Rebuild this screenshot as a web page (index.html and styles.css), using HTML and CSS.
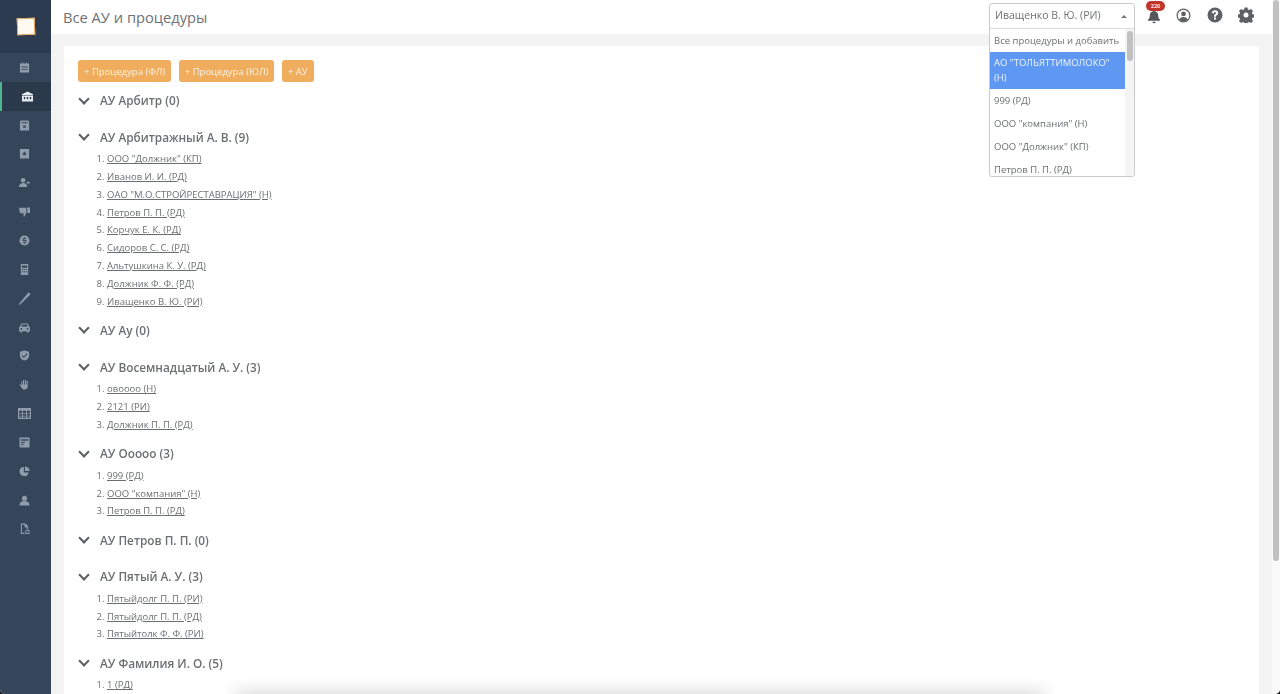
FILE: index.html
```html
<!DOCTYPE html>
<html lang="ru">
<head>
    <meta charset="UTF-8">
    <title>Все АУ и процедуры</title>
    <link rel="stylesheet" href="styles.css">
</head>
<body>
    <div class="app">
        <aside class="sidebar">
            <div class="brand"><span class="brand-mark"></span></div>
            <nav class="menu">
                <a class="menu-item"><svg viewBox="0 0 12 12"><path fill-rule="evenodd" d="M1 1.500h2.500V.5h1v1h3V.5h1v1H11V11.500H1zM2.500 5v1h7V5zm0 2.500v1h7v-1z"/></svg></a>
                <a class="menu-item active"><svg viewBox="0 0 12 12"><path fill-rule="evenodd" d="M6 .5 12 3.500V5H0V3.500zM0 5.500h12V11.500H0zM2 6.500V9h1.500V6.500zm3.200 0V9h1.600V6.500zm3.300 0V9H10V6.500z"/></svg></a>
                <a class="menu-item"><svg viewBox="0 0 12 12"><path fill-rule="evenodd" d="M1 1.500 2 .5h8l1 1v10H1zM2.500 2.500v1h7v-1zM4.500 6v2.500h3V6z"/></svg></a>
                <a class="menu-item"><svg viewBox="0 0 12 12"><path fill-rule="evenodd" d="M1 1h10v10.500H1zm5 2.500L5.200 5.200 3.500 5.500l1.200 1.200-.3 1.800L6 7.700l1.600.8-.3-1.800 1.200-1.200-1.700-.3z"/></svg></a>
                <a class="menu-item"><svg viewBox="0 0 12 12"><circle cx="4.500" cy="3.500" r="2.500"/><path d="M0 11c0-3 2-4.500 4.500-4.500S9 8 9 11zM9.500 4.500h1v1.200H12v1h-1.500V8h-1V6.700H8v-1h1.500z"/></svg></a>
                <a class="menu-item"><svg viewBox="0 0 12 12"><path d="M0 2h8v5L6 11.500H5V8H1zM9 1.500h3V7.500H9z"/></svg></a>
                <a class="menu-item"><svg viewBox="0 0 12 12"><path fill-rule="evenodd" d="M6 .5a5.500 5.500 0 1 0 0 11 5.500 5.500 0 0 0 0-11zM5.500 2.500h1v1H8v1H5v1h3v3H6.500v1h-1v-1H4v-1h3v-1H4V3.500h1.500z"/></svg></a>
                <a class="menu-item"><svg viewBox="0 0 12 12"><path fill-rule="evenodd" d="M2 0h8v12H2zM3.200 1.500v2.500h5.600V1.500zM3.200 5.500v1h1.500v-1zm2.200 0v1h1.200v-1zm2 0v1h1.400v-1zM3.200 8v1h1.500V8zm2.200 0v1h1.200V8zm2 0v1h1.400V8z"/></svg></a>
                <a class="menu-item large"><svg viewBox="0 0 12 12"><path d="M9.700 .3l2 1.700L2 11.500 .3 11.700z"/></svg></a>
                <a class="menu-item"><svg viewBox="0 0 12 12"><path fill-rule="evenodd" d="M2.500 1.500h7L11 5l1 1v4h-1.500v1.500h-2V10h-5v1.500h-2V10H0V6l1-1zM3.300 2.800 2.500 5h7l-.8-2.200zM2.500 6.500a1 1 0 1 0 0 2 1 1 0 0 0 0-2zm7 0a1 1 0 1 0 0 2 1 1 0 0 0 0-2z"/></svg></a>
                <a class="menu-item"><svg viewBox="0 0 12 12"><path fill-rule="evenodd" d="M6 .5 11 2v4c0 3-2.500 5-5 5.500C3.500 11 1 9 1 6V2zM3.500 5.500 2.800 6.300 5.300 8.800 9.300 4.300 8.500 3.500 5.300 7.100z"/></svg></a>
                <a class="menu-item"><svg viewBox="0 0 12 12"><path d="M2.500 2.500h1V6h.800V1.200h1.200V6h.800V1h1.200v5h.800V1.800h1.300V8c0 2-1.300 3.500-3.500 3.500-1.700 0-2.700-.8-3.500-2.200L.5 6.300l1-.6L2.500 7z"/></svg></a>
                <a class="menu-item large"><svg viewBox="0 0 12 12"><path fill-rule="evenodd" d="M0 1h12v10H0zM1 3.500v2h2.800v-2zm3.600 0v2h2.800v-2zm3.600 0v2H11v-2zM1 6.200v1.800h2.800V6.200zm3.600 0v1.800h2.800V6.200zm3.600 0v1.800H11V6.200zM1 8.700V10h2.800V8.700zm3.600 0V10h2.800V8.700zm3.600 0V10H11V8.700z"/></svg></a>
                <a class="menu-item"><svg viewBox="0 0 12 12"><path fill-rule="evenodd" d="M.5 .5h11v11H.5zM2 2.500v1.500h8V2.500zm0 3v1h4.500v-1zm0 2v1h3.500v-1z"/></svg></a>
                <a class="menu-item"><svg viewBox="0 0 12 12"><path d="M5.300 1a5 5 0 1 0 5.200 6H5.300z"/><path d="M6.500 .5V5.500H11.500A5 5 0 0 0 6.500 .5z"/></svg></a>
                <a class="menu-item"><svg viewBox="0 0 12 12"><circle cx="6" cy="3.500" r="2.800"/><path d="M.5 11.500c0-3.500 2-5 5.500-5s5.500 1.500 5.500 5z"/></svg></a>
                <a class="menu-item"><svg viewBox="0 0 12 12"><path fill-rule="evenodd" d="M2 .5h5l3 3V7H8.500V4.500H6V2H3.200v8.500H6V12H2zM7 7.500h4.500V12H7zm1 1v2.500h2.500V8.500z"/></svg></a>
            </nav>
        </aside>

        <div class="main">
            <header class="topbar">
                <h1>Все АУ и процедуры</h1>
                <div class="top-icons">
                    <span class="bell">
                        <svg viewBox="0 0 14 16"><path d="M7 1.500a1 1 0 0 1 1 1c2.300.5 3.500 2.300 3.500 4.500 0 2.500.8 3.500 2 4.500v1H.5v-1c1.200-1 2-2 2-4.500C2.500 4.800 3.700 3 6 2.500a1 1 0 0 1 1-1zM5.300 13.500h3.400a1.700 1.700 0 0 1-3.400 0z"/></svg>
                        <b class="badge">220</b>
                    </span>
                    <svg class="top-icon user-icon" viewBox="0 0 16 16"><circle cx="8" cy="8" r="6.800" fill="none" stroke="currentColor" stroke-width="1.300"/><circle cx="8" cy="6.300" r="2.500"/><path d="M3.500 12.500c.8-2 2.500-2.800 4.500-2.800s3.700.8 4.500 2.800C11.300 13.800 9.700 14.500 8 14.500s-3.300-.7-4.500-2z"/></svg>
                    <svg class="top-icon help-icon" viewBox="0 0 16 16"><path fill-rule="evenodd" d="M8 .5a7.500 7.500 0 1 0 0 15 7.500 7.500 0 0 0 0-15zM7 10.500h2v2H7zM8 3.300c1.900 0 3.200 1.100 3.200 2.700 0 1.200-.7 1.800-1.400 2.300-.6.400-.8.700-.8 1.400H7c0-1.400.5-2 1.300-2.600.6-.4.900-.6.900-1 0-.5-.5-.9-1.200-.9-.8 0-1.200.4-1.400 1.200l-2-.5C5 4.400 6.200 3.300 8 3.300z"/></svg>
                    <svg class="top-icon gear-icon" viewBox="0 0 16 16"><path fill-rule="evenodd" d="M6.500 .5h3l.4 2 1.300.6 1.800-1.100 2 2.100-1.100 1.700.6 1.400 2 .4v2.800l-2 .4-.6 1.400 1.100 1.700-2 2.100-1.800-1.100-1.300.6-.4 2h-3l-.4-2-1.300-.6-1.800 1.100-2-2.100 1.100-1.700-.6-1.400-2-.4V7.600l2-.4.6-1.400L1 4.100l2-2.100 1.800 1.100 1.300-.6zM8 5.500a2.500 2.500 0 1 0 0 5 2.500 2.500 0 0 0 0-5z"/></svg>
                </div>
            </header>

            <section class="card">
                <div class="actions">
                    <button class="btn">+ Процедура (ФЛ)</button>
                    <button class="btn">+ Процедура (ЮЛ)</button>
                    <button class="btn">+ АУ</button>
                </div>

                <div class="group">
                    <h2><span class="chevron"></span>АУ Арбитр (0)</h2>
                    <ol></ol>
                </div>
                <div class="group">
                    <h2><span class="chevron"></span>АУ Арбитражный А. В. (9)</h2>
                    <ol>
                        <li><a>ООО "Должник" (КП)</a></li>
                        <li><a>Иванов И. И. (РД)</a></li>
                        <li><a>ОАО "М.О.СТРОЙРЕСТАВРАЦИЯ" (Н)</a></li>
                        <li><a>Петров П. П. (РД)</a></li>
                        <li><a>Корчук Е. К. (РД)</a></li>
                        <li><a>Сидоров С. С. (РД)</a></li>
                        <li><a>Альтушкина К. У. (РД)</a></li>
                        <li><a>Должник Ф. Ф. (РД)</a></li>
                        <li><a>Иващенко В. Ю. (РИ)</a></li>
                    </ol>
                </div>
                <div class="group">
                    <h2><span class="chevron"></span>АУ Ау (0)</h2>
                    <ol></ol>
                </div>
                <div class="group">
                    <h2><span class="chevron"></span>АУ Восемнадцатый А. У. (3)</h2>
                    <ol>
                        <li><a>овоооо (Н)</a></li>
                        <li><a>2121 (РИ)</a></li>
                        <li><a>Должник П. П. (РД)</a></li>
                    </ol>
                </div>
                <div class="group">
                    <h2><span class="chevron"></span>АУ Ооооо (3)</h2>
                    <ol>
                        <li><a>999 (РД)</a></li>
                        <li><a>ООО "компания" (Н)</a></li>
                        <li><a>Петров П. П. (РД)</a></li>
                    </ol>
                </div>
                <div class="group">
                    <h2><span class="chevron"></span>АУ Петров П. П. (0)</h2>
                    <ol></ol>
                </div>
                <div class="group">
                    <h2><span class="chevron"></span>АУ Пятый А. У. (3)</h2>
                    <ol>
                        <li><a>Пятыйдолг П. П. (РИ)</a></li>
                        <li><a>Пятыйдолг П. П. (РД)</a></li>
                        <li><a>Пятыйтолк Ф. Ф. (РИ)</a></li>
                    </ol>
                </div>
                <div class="group">
                    <h2><span class="chevron"></span>АУ Фамилия И. О. (5)</h2>
                    <ol>
                        <li><a>1 (РД)</a></li>
                    </ol>
                </div>
            </section>
        </div>

        <div class="scrollbar"><span class="scrollbar-thumb"></span></div>
        <div class="bottom-shade"></div>
    </div>

    <div class="select">
        <div class="select-value">Иващенко В. Ю. (РИ)<span class="select-arrow"></span></div>
        <div class="select-list">
            <div class="select-options">
                <div class="option">Все процедуры и добавить</div>
                <div class="option selected">АО "ТОЛЬЯТТИМОЛОКО" (Н)</div>
                <div class="option">999 (РД)</div>
                <div class="option">ООО "компания" (Н)</div>
                <div class="option">ООО "Должник" (КП)</div>
                <div class="option">Петров П. П. (РД)</div>
            </div>
            <div class="select-scroll"><span class="select-thumb"></span></div>
        </div>
    </div>
</body>
</html>
```

FILE: styles.css
```css
html, body {
    margin: 0;
    height: 100%;
    overflow: hidden;
}
html {
    background-color: #15181c;
}
body {
    font-family: "Open Sans", Arial, sans-serif;
    color: #6c6f71;
    filter: blur(0.6px);
}
.app {
    position: relative;
    display: flex;
    height: 694px;
    background-color: #f3f3f4;
    border-radius: 0 0 5px 5px;
    overflow: hidden;
}

/* sidebar */
.sidebar {
    width: 51px;
    flex-shrink: 0;
    background-color: #36465a;
}
.brand {
    height: 53px;
    display: flex;
    align-items: center;
    justify-content: center;
    background-color: #2c3b4f;
}
.brand-mark {
    width: 16px;
    height: 15px;
    background-color: #fffaf2;
    border: 1px solid #e8a552;
    transform: rotate(-2deg);
    margin-top: -1px;
}
.menu-item {
    display: flex;
    align-items: center;
    justify-content: center;
    height: 28.850px;
    margin-right: 2px;
}
.menu-item svg {
    width: 11px;
    height: 11px;
    fill: #8f9cab;
}
.menu-item.large svg {
    width: 13px;
    height: 13px;
}
.menu-item.active {
    margin-right: 0;
    padding-left: 3px;
    background-color: #2b3a4b;
    box-shadow: inset 2px 0 0 #4fb58f;
}
.menu-item.active svg {
    fill: #e8ecf0;
}

/* top bar */
.main {
    flex: 1;
    min-width: 0;
    display: flex;
    flex-direction: column;
}
.topbar {
    height: 34px;
    flex-shrink: 0;
    display: flex;
    justify-content: space-between;
    background-color: #ffffff;
    padding: 0 18px 0 12px;
}
h1 {
    margin: 8px 0 0;
    font-size: 14.700px;
    line-height: 18px;
    font-weight: 400;
    color: #6f7274;
}
.top-icons {
    display: flex;
    align-items: center;
    gap: 16px;
    height: 30px;
}
.top-icons svg {
    display: block;
    fill: currentColor;
}
.bell {
    position: relative;
    color: #56595b;
    margin-right: -1px;
    margin-top: 2px;
}
.bell svg {
    width: 14px;
    height: 15px;
}
.badge {
    position: absolute;
    top: -8px;
    left: -1px;
    width: 19px;
    height: 10px;
    border-radius: 5px;
    background-color: #c0342c;
    color: #fbe6e4;
    font-size: 5.500px;
    line-height: 10px;
    text-align: center;
}
.top-icon {
    width: 16px;
    height: 16px;
    color: #5e6163;
}
.user-icon {
    width: 15px;
    height: 15px;
}
.gear-icon {
    margin-left: -1px;
}

/* card */
.card {
    flex: 1;
    background-color: #ffffff;
    margin: 12px 13px 0;
    padding: 14px 14px 0;
    overflow: hidden;
}
.actions {
    display: flex;
    gap: 7.500px;
    margin-bottom: 7px;
}
.btn {
    height: 22px;
    padding: 0 6px;
    border: none;
    border-radius: 3px;
    background-color: #f0ad5e;
    color: #fdf3e4;
    font-family: inherit;
    font-size: 9.500px;
}
h2 {
    display: flex;
    align-items: center;
    height: 22px;
    margin: 0 0 2.600px;
    font-size: 11.800px;
    font-weight: 600;
    color: #6c6f71;
}
.chevron {
    width: 6px;
    height: 6px;
    margin: -3px 12px 0 2px;
    border-right: 2px solid #5c5f61;
    border-bottom: 2px solid #5c5f61;
    transform: rotate(45deg);
}
ol {
    margin: 0 0 8.500px;
    padding: 0 0 0 29px;
    min-height: 3.600px;
    font-size: 9.500px;
    line-height: 17.800px;
}
li a {
    text-decoration: underline;
}

/* select dropdown */
.select {
    position: absolute;
    top: 3px;
    left: 989px;
    width: 146px;
    height: 174px;
    border: 1px solid #c9cbcd;
    border-radius: 3px;
    background-color: #fff;
    box-sizing: border-box;
    font-size: 9.500px;
    overflow: hidden;
}
.select-value {
    position: relative;
    height: 24px;
    line-height: 23px;
    padding-left: 5px;
    font-size: 10.500px;
    color: #6f7274;
    border-bottom: 1px solid #dcdddf;
}
.select-arrow {
    position: absolute;
    right: 7px;
    top: 11px;
    border: 3px solid transparent;
    border-top: none;
    border-bottom: 3px solid #77797b;
}
.select-list {
    display: flex;
}
.select-options {
    width: 135px;
    flex-shrink: 0;
}
.option {
    padding: 0 4px;
    height: 23px;
    line-height: 23px;
}
.option.selected {
    height: 29px;
    padding-top: 4px;
    padding-bottom: 4px;
    line-height: 14.500px;
    background-color: #5f98f3;
    color: #eef4fd;
}
.select-scroll {
    flex: 1;
    height: 150px;
    background-color: #f4f4f4;
}
.select-thumb {
    display: block;
    width: 6px;
    height: 30px;
    margin: 2px auto 0;
    border-radius: 3px;
    background-color: #c1c1c1;
}

/* page scrollbar */
.scrollbar {
    width: 8px;
    flex-shrink: 0;
    background-color: #fafafa;
}
.scrollbar-thumb {
    display: block;
    width: 6px;
    height: 561px;
    margin-left: 1px;
    border-radius: 3px;
    background-color: #c1c1c1;
}

.bottom-shade {
    position: absolute;
    left: 240px;
    bottom: -14px;
    width: 800px;
    height: 12px;
    box-shadow: 0 0 18px 4px rgba(0, 0, 0, 0.16);
}
```
